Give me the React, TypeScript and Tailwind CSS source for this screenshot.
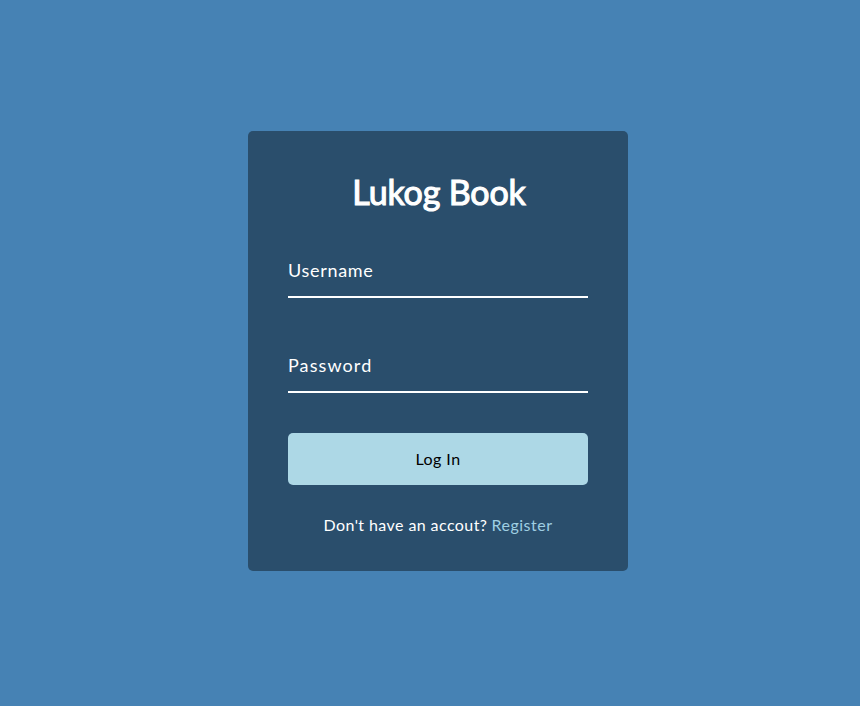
import React from "react";

export default function App() {
  return (
    <main className="flex h-screen items-center justify-center bg-[#4682b4] pb-1 pl-4 font-['Lato','Noto_Sans',sans-serif] text-white">
      <form className="flex h-[440px] w-[380px] flex-col rounded-[5px] bg-[#2a4e6c] px-10 pt-[38px]">
        <h1 className="h-[45px] pl-[2px] text-center text-[34px] leading-[45px] font-normal whitespace-nowrap [-webkit-text-stroke:1.1px_white]">
          <span className="inline-block tracking-[-0.15px]">Lukog Book</span>
        </h1>
        <label className="mt-10 block h-[44px] border-b-2 border-white text-[18px] leading-[32px]">
          <span className="inline-block tracking-[0.7px]">Username</span>
        </label>
        <label className="mt-[51px] block h-[44px] border-b-2 border-white text-[18px] leading-[32px]">
          <span className="inline-block tracking-[1.1px]">Password</span>
        </label>
        <button type="button" className="mt-10 h-[52px] rounded-[5px] bg-[#add8e6] text-[16px] text-black">
          <span className="inline-block tracking-[0.45px]">Log In</span>
        </button>
        <p className="mt-[30px] text-center text-[16px] leading-5 whitespace-nowrap">
          <span className="inline-block tracking-[0.42px]">Don't have an accout?</span>{" "}
          <a className="inline-block tracking-[0.5px] text-[#9fcfe3]">Register</a>
        </p>
      </form>
    </main>
  );
}
